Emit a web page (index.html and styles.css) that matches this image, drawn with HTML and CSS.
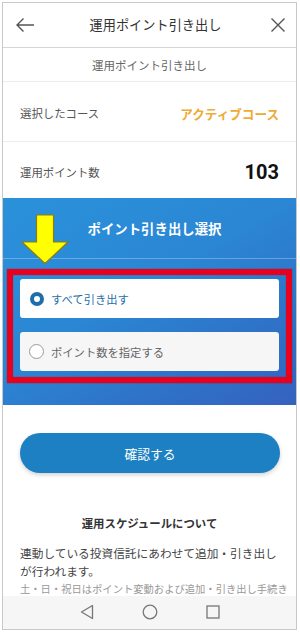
FILE: index.html
```html
<!DOCTYPE html>
<html lang="ja">
<head>
<meta charset="utf-8">
<title>運用ポイント引き出し</title>
<link rel="stylesheet" href="styles.css">
</head>
<body>
<div class="frame">
  <div class="screen">
    <header class="appbar">
      <svg class="icon-back" width="20" height="16" viewBox="0 0 20 16"><path d="M19 8H2M8.5 1.5L2 8l6.5 6.5" fill="none" stroke="#555" stroke-width="1.4"/></svg>
      <h1 class="appbar-title">運用ポイント引き出し</h1>
      <svg class="icon-close" width="16" height="16" viewBox="0 0 16 16"><path d="M1.5 1.5l13 13M14.5 1.5l-13 13" fill="none" stroke="#555" stroke-width="1.4"/></svg>
    </header>
    <div class="subhead">運用ポイント引き出し</div>
    <div class="row row-course"><span class="label">選択したコース</span><span class="course">アクティブコース</span></div>
    <div class="row row-points"><span class="label">運用ポイント数</span><span class="points">103</span></div>
    <section class="select">
      <h2 class="select-title">ポイント引き出し選択</h2>
      <div class="options">
        <div class="option option-on"><span class="radio radio-on"></span><span class="option-text">すべて引き出す</span></div>
        <div class="option option-off"><span class="radio"></span><span class="option-text">ポイント数を指定する</span></div>
      </div>
      <div class="highlight"></div>
      <svg class="arrow" width="48" height="51" viewBox="0 0 48 51"><path d="M15.5 1H32.5V28H47L24 49.5L1 28H15.5Z" fill="#ffff00" stroke="#8c7c12" stroke-width="1.2"/></svg>
    </section>
    <div class="action"><button class="confirm">確認する</button></div>
    <section class="schedule">
      <h3 class="schedule-title">運用スケジュールについて</h3>
      <p class="schedule-text">連動している投資信託にあわせて追加・引き出しが行われます。</p>
      <p class="schedule-note">土・日・祝日はポイント変動および追加・引き出し手続き</p>
    </section>
  </div>
  <nav class="sysnav">
    <svg width="14" height="16" viewBox="0 0 14 16"><path d="M12.5 1.5V14.5L1.5 8Z" fill="none" stroke="#777" stroke-width="1.3" stroke-linejoin="round"/></svg>
    <svg width="16" height="16" viewBox="0 0 16 16"><circle cx="8" cy="8" r="6.8" fill="none" stroke="#777" stroke-width="1.3"/></svg>
    <svg width="14" height="14" viewBox="0 0 14 14"><rect x="1" y="1" width="12" height="12" fill="none" stroke="#777" stroke-width="1.3"/></svg>
  </nav>
</div>
</body>
</html>
```

FILE: styles.css
```css
* { box-sizing: border-box; }
html, body { margin: 0; padding: 0; background: #fff; }
body {
  font-family: "Noto Sans CJK JP", "Noto Sans", sans-serif;
  color: #333;
}
.frame {
  margin: 2px 0 0 2px;
  width: 295px;
  height: 628px;
  border: 1px solid #c9c9c9;
  display: flex;
  flex-direction: column;
  background: #fff;
}
.screen {
  height: 593px;
  overflow: hidden;
  flex: none;
}
.appbar {
  height: 45px;
  border-bottom: 1px solid #d6d6d6;
  display: flex;
  align-items: center;
  justify-content: space-between;
  padding: 0 10px 0 12px;
}
.appbar-title {
  margin: 0;
  font-size: 13.2px;
  font-weight: 400;
  color: #333;
  line-height: 1;
  padding-left: 6px;
}
.icon-back, .icon-close { flex: none; }
.subhead {
  height: 34px;
  border-bottom: 1px solid #ececec;
  display: flex;
  align-items: center;
  justify-content: center;
  font-size: 11.5px;
  color: #666;
}
.row {
  display: flex;
  align-items: center;
  justify-content: space-between;
  padding: 0 17px;
}
.row-course {
  height: 60px;
  border-bottom: 1px solid #ececec;
  padding-top: 3px;
}
.row-points {
  height: 56px;
  padding-top: 4px;
}
.label {
  font-size: 11.4px;
  color: #555;
}
.course {
  font-size: 12.6px;
  font-weight: 700;
  color: #efab35;
}
.points {
  font-family: "Roboto", "Liberation Sans", sans-serif;
  font-size: 20px;
  font-weight: 700;
  color: #111;
}
.select {
  position: relative;
  height: 207px;
  background: linear-gradient(150deg, #2a92da 0%, #2b86d4 45%, #2f6fc6 80%, #3562bf 100%);
}
.select-title {
  margin: 0;
  height: 61px;
  border-bottom: 1px solid rgba(255, 255, 255, 0.28);
  display: flex;
  align-items: center;
  justify-content: center;
  font-size: 13.4px;
  font-weight: 700;
  color: #fff;
  padding-left: 10px;
}
.options {
  display: flex;
  flex-direction: column;
  gap: 14px;
  padding: 20px 0 0 17px;
}
.option {
  width: 259px;
  height: 39px;
  border-radius: 3px;
  display: flex;
  align-items: center;
  gap: 7px;
  padding-left: 9px;
}
.option-on { background: #fff; }
.option-off { background: #f6f6f6; }
.radio {
  width: 15px;
  height: 15px;
  border-radius: 50%;
  border: 1px solid #9a9a9a;
  background: #fff;
  flex: none;
}
.radio-on {
  width: 14px;
  height: 14px;
  border: 4px solid #1d6fab;
  margin-left: 1px;
}
.option-text { font-size: 11.3px; }
.option-on .option-text { color: #1f6fa8; }
.option-off .option-text { color: #666; }
.highlight {
  position: absolute;
  left: 4px;
  top: 71px;
  width: 285px;
  height: 114px;
  border: 6px solid #e8001c;
  box-shadow: 0 0 1px rgba(60, 0, 0, 0.6), inset 0 0 1px rgba(60, 0, 0, 0.6);
}
.arrow {
  position: absolute;
  left: 18px;
  top: 16px;
}
.action {
  padding: 28px 0 0 17px;
}
.confirm {
  display: block;
  width: 260px;
  height: 40px;
  border: none;
  border-radius: 20px;
  background: #1c80c3;
  color: #fff;
  font-family: inherit;
  font-size: 12.8px;
  box-shadow: 0 2px 4px rgba(0, 0, 0, 0.18);
}
.schedule {
  padding: 41px 17px 0 17px;
}
.schedule-title {
  margin: 0;
  text-align: center;
  font-size: 11.4px;
  font-weight: 700;
  line-height: 18px;
  color: #333;
}
.schedule-text {
  margin: 12px 0 0;
  font-size: 11.7px;
  line-height: 18px;
  color: #444;
}
.schedule-note {
  margin: 2px 0 0;
  font-size: 10.3px;
  line-height: 14px;
  color: #999;
  white-space: nowrap;
}
.sysnav {
  flex: 1;
  background: #f6f6f6;
  display: flex;
  align-items: center;
  justify-content: center;
  gap: 48px;
  padding-bottom: 2px;
}
```
